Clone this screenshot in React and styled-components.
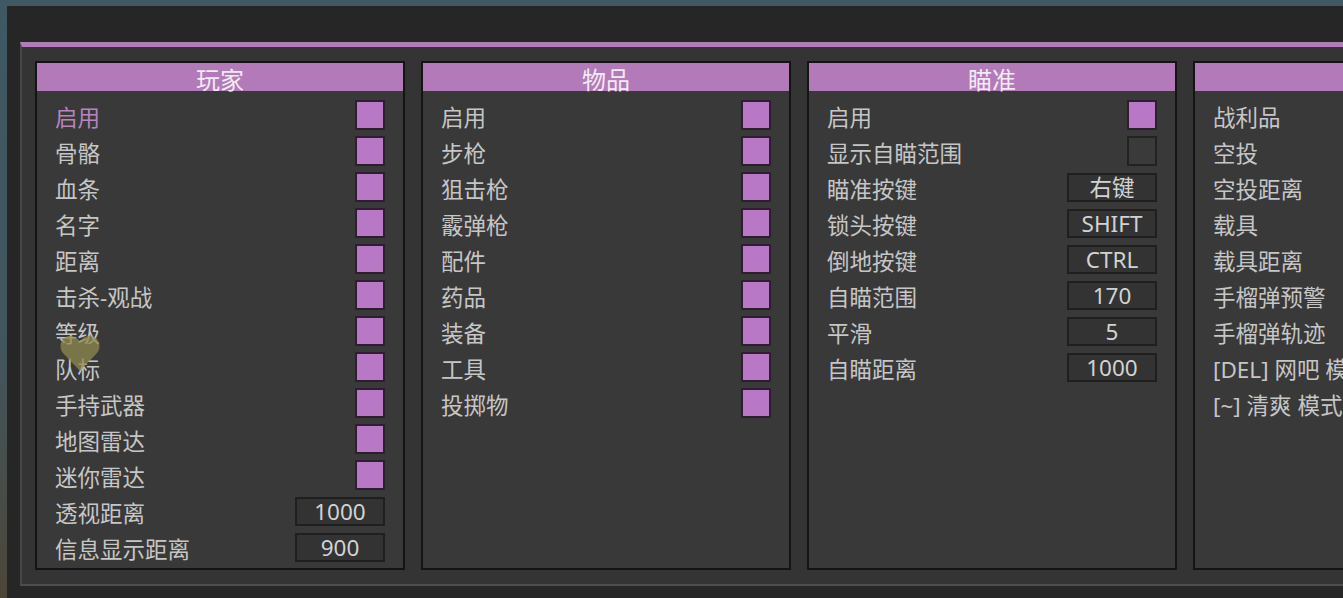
import React from 'react';
import styled, { createGlobalStyle } from 'styled-components';

const GlobalStyle = createGlobalStyle`
  html, body {
    margin: 0;
    padding: 0;
    height: 100%;
    overflow: hidden;
  }
  body {
    background: linear-gradient(180deg, #3f5863 0%, #43555c 60%, #4c4638 100%);
    font-family: "Noto Sans", "Noto Sans CJK SC", sans-serif;
  }
`

const Window = styled.div`
  margin: 6px 0 0 7px;
  height: 592px;
  box-sizing: border-box;
  padding: 36px 0 0 13px;
  background: #262626;
  overflow: hidden;
`

const Frame = styled.div`
  width: max-content;
  display: flex;
  gap: 16px;
  padding: 14px 0 14px 13px;
  background: #343434;
  border-top: 5px solid #b27bba;
  border-left: 2px solid #474747;
  border-bottom: 2px solid #4e4e4e;
`

const Panel = styled.section`
  position: relative;
  width: 370px;
  height: 509px;
  box-sizing: border-box;
  border: 2px solid #141414;
  background: #393939;
`

const Header = styled.div`
  height: 28px;
  background: #b27ab9;
  color: #f2eaf2;
  font-size: 24px;
  line-height: 34px;
  text-align: center;
  white-space: nowrap;
  overflow: visible;
`

const Rows = styled.div`
  padding-top: 8px;
`

const Row = styled.div`
  height: 36px;
  display: flex;
  align-items: center;
  justify-content: space-between;
  padding: 0 18px;
`

const Label = styled.span`
  font-size: 22.5px;
  margin-top: -2px;
  color: ${p => (p.$active ? '#b785be' : '#c6c6c6')};
  white-space: nowrap;
`

const Check = styled.div`
  width: 30px;
  height: 30px;
  box-sizing: border-box;
  margin-bottom: 4px;
  border: 2px solid ${p => (p.$on ? '#2d1f30' : '#222222')};
  background: ${p => (p.$on ? '#b878c6' : '#3a3a3a')};
`

const Value = styled.div`
  width: 90px;
  height: 29px;
  box-sizing: border-box;
  margin-bottom: 3px;
  border: 2px solid #1f1f1f;
  background: #333333;
  color: #d2d2d2;
  font-size: 22.5px;
  line-height: 26px;
  text-align: center;
`

const Cursor = styled.svg`
  position: absolute;
  left: 22px;
  top: 271px;
  width: 42px;
  height: 38px;
  opacity: 0.75;
  pointer-events: none;
`

const panels = [
  {
    title: '玩家',
    rows: [
      ['启用', true, true],
      ['骨骼', true],
      ['血条', true],
      ['名字', true],
      ['距离', true],
      ['击杀-观战', true],
      ['等级', true],
      ['队标', true],
      ['手持武器', true],
      ['地图雷达', true],
      ['迷你雷达', true],
      ['透视距离', '1000'],
      ['信息显示距离', '900'],
    ],
    cursor: true,
  },
  {
    title: '物品',
    rows: [
      ['启用', true],
      ['步枪', true],
      ['狙击枪', true],
      ['霰弹枪', true],
      ['配件', true],
      ['药品', true],
      ['装备', true],
      ['工具', true],
      ['投掷物', true],
    ],
  },
  {
    title: '瞄准',
    rows: [
      ['启用', true],
      ['显示自瞄范围', false],
      ['瞄准按键', '右键'],
      ['锁头按键', 'SHIFT'],
      ['倒地按键', 'CTRL'],
      ['自瞄范围', '170'],
      ['平滑', '5'],
      ['自瞄距离', '1000'],
    ],
  },
  {
    title: '其他',
    hideTitle: true,
    rows: [
      ['战利品', null],
      ['空投', null],
      ['空投距离', null],
      ['载具', null],
      ['载具距离', null],
      ['手榴弹预警', null],
      ['手榴弹轨迹', null],
      ['[DEL] 网吧 模式', null],
      ['[~] 清爽 模式', null],
    ],
  },
]

function Control({ value }) {
  if (value === null || value === undefined) return null
  if (typeof value === 'boolean') return <Check $on={value} />
  return <Value>{value}</Value>
}

export default function App() {
  return (
    <>
      <GlobalStyle />
      <Window>
        <Frame>
          {panels.map(panel => (
            <Panel key={panel.title}>
              <Header>{panel.hideTitle ? '' : panel.title}</Header>
              <Rows>
                {panel.rows.map(([label, value, active]) => (
                  <Row key={label}>
                    <Label $active={active}>{label}</Label>
                    <Control value={value} />
                  </Row>
                ))}
              </Rows>
              {panel.cursor && (
                <Cursor viewBox="0 0 42 38">
                  <path
                    d="M21 37 L4 19 C-1 13 2 3 10 2 C15 1.5 19 4 21 8 C23 4 27 1.5 32 2 C40 3 43 13 38 19 Z"
                    fill="#8f8a4e"
                  />
                </Cursor>
              )}
            </Panel>
          ))}
        </Frame>
      </Window>
    </>
  )
}
